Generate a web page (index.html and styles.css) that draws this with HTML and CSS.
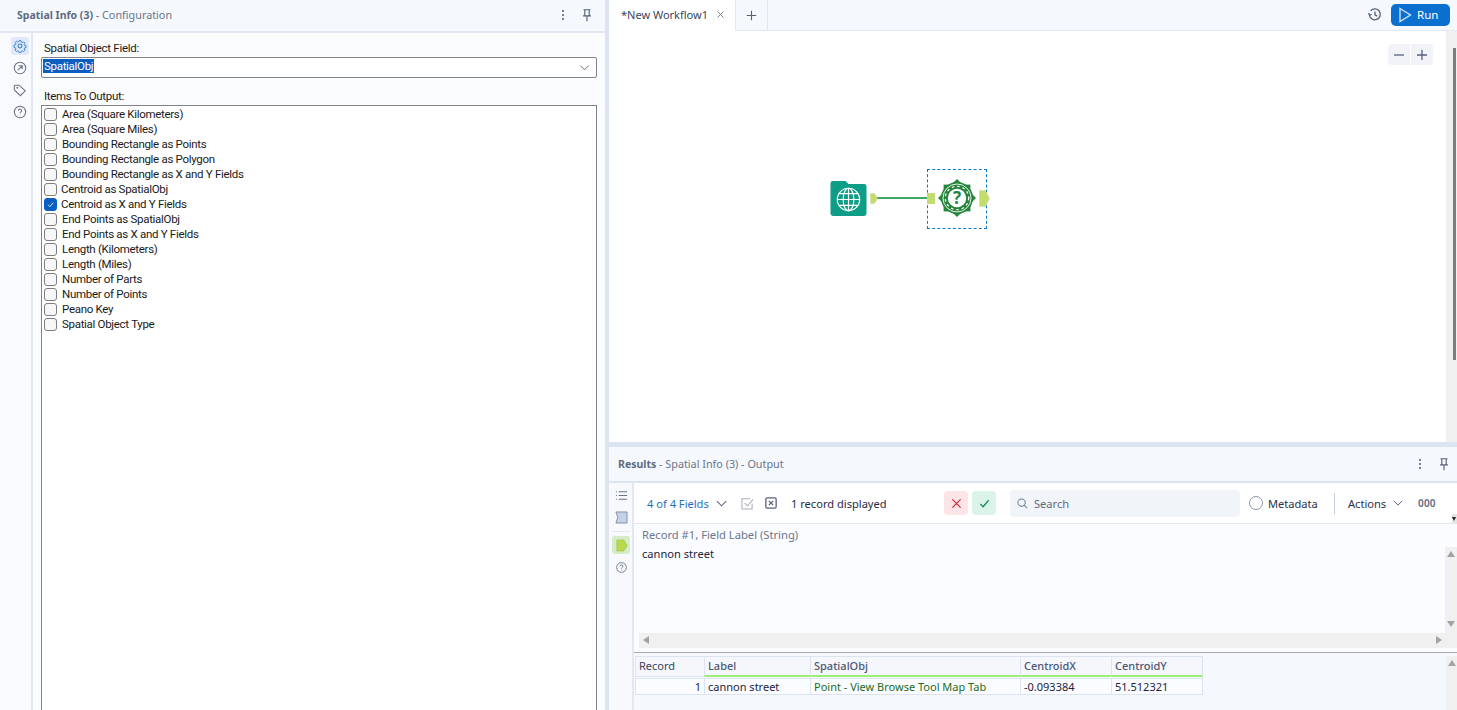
FILE: index.html
```html
<!DOCTYPE html>
<html lang="en">
<head>
<meta charset="utf-8">
<title>Spatial Info</title>
<link rel="stylesheet" href="styles.css">
</head>
<body>
<div class="app">
  <section class="left">
    <header class="phead">
      <div class="ptitle"><b>Spatial Info (3)</b> <span>- Configuration</span></div>
      <svg class="ic dots" viewBox="0 0 16 16"><circle cx="8" cy="3.5" r="1.2"/><circle cx="8" cy="8" r="1.2"/><circle cx="8" cy="12.5" r="1.2"/></svg>
      <svg class="ic pin" viewBox="0 0 16 16"><path d="M4 2h8M5.5 2v6.5M10.5 2v6.5M3.5 9h9M8 9v6"/></svg>
    </header>
    <div class="lbody">
      <nav class="lrail">
        <div class="rbtn on"><svg viewBox="0 0 16 16"><circle cx="8" cy="8" r="2.2"/><path d="M6.800 1.500h2.400l.4 1.900 1.400.6 1.600-1 1.700 1.700-1 1.600.6 1.400 1.900.4v2.400l-1.900.4-.6 1.400 1 1.600-1.700 1.700-1.600-1-1.400.6-.4 1.900H6.800l-.4-1.900-1.400-.6-1.600 1-1.700-1.700 1-1.600-.6-1.400-1.900-.4V7.300l1.900-.4.6-1.400-1-1.600 1.700-1.700 1.600 1 1.400-.6z" transform="translate(1 .6) scale(.88)"/></svg></div>
        <div class="rbtn"><svg viewBox="0 0 16 16"><circle cx="8" cy="8" r="6.500"/><path d="M5.500 10.500l5-5M6.500 5.500h4v4"/></svg></div>
        <div class="rbtn"><svg viewBox="0 0 16 16"><path d="M1.500 3v5l7 6.500 5.500-5.500-7-6.500H2.500a1 1 0 0 0-1 .5z"/><circle cx="5" cy="5.500" r=".5"/></svg></div>
        <div class="rbtn"><svg viewBox="0 0 16 16"><circle cx="8" cy="8" r="6.500"/><path d="M6.200 6.400a1.800 1.800 0 1 1 2.600 1.700c-.5.3-.8.6-.8 1.300M8 11v.6"/></svg></div>
      </nav>
      <div class="form">
        <label class="flabel">Spatial Object Field:</label>
        <div class="select"><span class="sel">SpatialObj</span>
          <svg class="chev" viewBox="0 0 12 12"><path d="M1.500 4l4.500 4.500L10.500 4"/></svg></div>
        <label class="flabel second">Items To Output:</label>
        <ul class="list">
          <li><i class="cb"></i>Area (Square Kilometers)</li>
          <li><i class="cb"></i>Area (Square Miles)</li>
          <li><i class="cb"></i>Bounding Rectangle as Points</li>
          <li><i class="cb"></i>Bounding Rectangle as Polygon</li>
          <li><i class="cb"></i>Bounding Rectangle as X and Y Fields</li>
          <li><i class="cb tight"></i>Centroid as SpatialObj</li>
          <li><i class="cb tight checked"><svg viewBox="0 0 13 13"><path d="M3.500 6.800l2.200 2.200 4-4.600"/></svg></i>Centroid as X and Y Fields</li>
          <li><i class="cb"></i>End Points as SpatialObj</li>
          <li><i class="cb"></i>End Points as X and Y Fields</li>
          <li><i class="cb"></i>Length (Kilometers)</li>
          <li><i class="cb"></i>Length (Miles)</li>
          <li><i class="cb"></i>Number of Parts</li>
          <li><i class="cb"></i>Number of Points</li>
          <li><i class="cb"></i>Peano Key</li>
          <li><i class="cb"></i>Spatial Object Type</li>
        </ul>
      </div>
    </div>
  </section>
  <div class="vdiv"></div>
  <section class="right">
    <header class="tabbar">
      <div class="tab">*New Workflow1<svg class="ic x" viewBox="0 0 12 12"><path d="M2 2l8 8M10 2l-8 8"/></svg></div>
      <div class="plus"><svg class="ic" viewBox="0 0 14 14"><path d="M7 1v12M1 7h12"/></svg></div>
      <div class="tabfill">
        <svg class="ic hist" viewBox="0 0 16 16"><path d="M2.600 8.500A5.800 5.800 0 1 0 4 4M1.800 6.500l.9 2.400 2.300-1.200M8.500 4.800v3.600l2.400 1.400"/></svg>
        <button class="run"><svg viewBox="0 0 14 16"><path d="M2 1.500l10.500 6.500L2 14.500z"/></svg>Run</button>
      </div>
    </header>
    <div class="canvas">
      <div class="zoom"><span><svg viewBox="0 0 12 12"><path d="M1 6h10"/></svg></span><span><svg viewBox="0 0 12 12"><path d="M1 6h10M6 1v10"/></svg></span></div>
      <div class="cscroll"><div class="thumb"></div></div>
      <svg class="wire" viewBox="0 0 60 4"><path d="M0 2h60"/></svg>
      <svg class="node input" viewBox="0 0 38 38"><path class="folder" d="M3 1h13l3 3h16a2.500 2.500 0 0 1 2.500 2.500v28a2.500 2.500 0 0 1-2.500 2.500H3a2.500 2.500 0 0 1-2.500-2.500v-31A2.500 2.500 0 0 1 3 1z"/><g class="globe"><circle cx="19" cy="20" r="11.500"/><ellipse cx="19" cy="20" rx="5.500" ry="11.500"/><path d="M19 8.500v23M7.500 20h23M9.500 14h19M9.500 26h19"/></g></svg>
      <svg class="anchor a1" viewBox="0 0 8 11"><path d="M.5.500h4l3 5-3 5h-4z"/></svg>
      <div class="selbox"></div>
      <svg class="anchor a2" viewBox="0 0 8 11"><path d="M0 0h8v11H0z"/></svg>
      <svg class="node info" viewBox="0 0 38 38"><polygon class="burst" points="19,0 38,19 19,38 0,19"/><polygon class="burst" points="5.600,5.600 32.400,5.600 32.400,32.400 5.600,32.400"/><circle class="burst" cx="19" cy="19" r="16"/><circle class="ring" cx="19" cy="19" r="14"/><circle class="dash" cx="19" cy="19" r="11.700"/><circle class="core" cx="19" cy="19" r="9.200"/><text x="19" y="25" text-anchor="middle">?</text></svg>
      <svg class="anchor a3" viewBox="0 0 11 17"><path d="M.5.500h6l4 8-4 8h-6z"/></svg>
    </div>
    <div class="hdiv"></div>
    <section class="results">
      <header class="phead rhead">
        <div class="ptitle"><b>Results</b> <span>- Spatial Info (3) - Output</span></div>
        <svg class="ic dots" viewBox="0 0 16 16"><circle cx="8" cy="3.500" r="1.200"/><circle cx="8" cy="8" r="1.200"/><circle cx="8" cy="12.500" r="1.200"/></svg>
        <svg class="ic pin" viewBox="0 0 16 16"><path d="M4 2h8M5.500 2v6.500M10.500 2v6.500M3.500 9h9M8 9v6"/></svg>
      </header>
      <div class="rbody">
        <nav class="rrail">
          <div class="rbtn2"><svg class="ln" viewBox="0 0 14 14"><path d="M1 3h1M4 3h9M1 7h1M4 7h9M1 11h1M4 11h9"/></svg></div>
          <div class="rbtn2 sep"><svg viewBox="0 0 14 14"><path class="flag" d="M1 1h12v12H1l2-6z"/></svg></div>
          <div class="rbtn2 act"><svg viewBox="0 0 14 14"><path class="tag" d="M2 1h7.500L13 7l-3.500 6H2z"/></svg></div>
          <div class="rbtn2"><svg class="ln" viewBox="0 0 16 16"><circle cx="8" cy="8" r="6"/><path d="M6.200 6.400a1.800 1.800 0 1 1 2.600 1.700c-.5.3-.8.6-.8 1.300M8 11v.6"/></svg></div>
        </nav>
        <div class="rmain">
          <div class="toolbar">
            <span class="fields">4 of 4 Fields</span>
            <svg class="tchev" viewBox="0 0 12 12"><path d="M1 3.500l5 5 5-5"/></svg>
            <svg class="tcheck" viewBox="0 0 14 14"><path d="M12 7v6H1V2h9M4 6.500l3 3 6-7"/></svg>
            <svg class="tx" viewBox="0 0 14 14"><rect x="1" y="1" width="12" height="12" rx="1.500"/><path d="M4.500 4.500l5 5M9.500 4.500l-5 5"/></svg>
            <span class="count">1 record displayed</span>
            <span class="sq red"><svg viewBox="0 0 12 12"><path d="M1.500 1.500l9 9M10.500 1.500l-9 9"/></svg></span>
            <span class="sq green"><svg viewBox="0 0 12 12"><path d="M1.500 6.500l3 3 6-7"/></svg></span>
            <div class="search"><svg viewBox="0 0 12 12"><circle cx="5" cy="5" r="4"/><path d="M8 8l3 3"/></svg>Search</div>
            <i class="radio"></i><span class="meta">Metadata</span>
            <span class="vsep"></span>
            <span class="actions">Actions</span>
            <svg class="achev" viewBox="0 0 12 12"><path d="M1 3.500l5 5 5-5"/></svg>
            <span class="ooo">000</span>
            <span class="tscroll"></span>
          </div>
          <div class="record">
            <div class="rtext">
              <div class="rlabel">Record #1, Field Label (String)</div>
              <div class="rval">cannon street</div>
            </div>
            <div class="vbar"><i class="up"></i><i class="down"></i></div>
          </div>
          <div class="hbar"><i class="lft"></i><i class="rgt"></i></div>
          <div class="tablewrap">
            <div class="table">
              <div class="th plain">Record</div><div class="th">Label</div><div class="th">SpatialObj</div><div class="th">CentroidX</div><div class="th">CentroidY</div>
              <div class="td num">1</div><div class="td">cannon street</div><div class="td geo">Point - View Browse Tool Map Tab</div><div class="td">-0.093384</div><div class="td">51.512321</div>
            </div>
            <div class="vbar2"><i class="up"></i></div>
          </div>
        </div>
      </div>
    </section>
  </section>
</div>
</body>
</html>
```
FILE: styles.css
```css
*{box-sizing:border-box}
html,body{margin:0;height:100%;overflow:hidden}
body{font-family:"Noto Sans","Open Sans",sans-serif;font-size:12px;color:#1f2a44;background:#fff}
svg{display:block;fill:none}
.app{display:flex;height:710px;width:1457px}
.left{width:605px;display:flex;flex-direction:column;background:#fbfcfe}
.vdiv{width:4px;background:#dde4f1}
.right{flex:1;min-width:0;display:flex;flex-direction:column}

.phead{height:33px;flex:none;display:flex;align-items:center;background:#f5f8fd;border-bottom:2px solid #e1e7f3;padding:0 11px 2px 17px}
.ptitle{flex:1;font-size:10.800px;color:#6b7588;white-space:nowrap}
.ptitle b{font-size:10.500px;font-weight:700;color:#5f6a80}
.ic{stroke:#55607a;stroke-width:1.400}
.dots{width:14px;height:14px;fill:#55607a;stroke:none;margin-right:10px}
.pin{width:14px;height:14px;stroke-width:1.300}

.lbody{flex:1;min-height:0;display:flex}
.lrail{width:33px;flex:none;border-right:2px solid #e1e7f3;background:#f9fafd;padding:4px 0 0 11px;display:flex;flex-direction:column;gap:4px}
.rbtn{width:18px;height:18px;border-radius:3px;display:flex;align-items:center;justify-content:center}
.rbtn svg{width:14px;height:14px;stroke:#6a7488;stroke-width:1.200}
.rbtn.on{background:#dfe9fb}
.rbtn.on svg{stroke:#2f7fd3}
.form{flex:1;min-width:0;padding:7px 8px 0 8px;font-family:Roboto,"Liberation Sans",sans-serif;font-size:11.500px;color:#1a1a1a;letter-spacing:-.3px}
.flabel{display:block;height:17px;line-height:16px;padding-left:3px}
.flabel.second{margin-top:10px;height:17px;line-height:17px}
.select{height:21px;border:1px solid #7f8489;border-radius:2px;background:#fff;display:flex;align-items:center;justify-content:space-between;padding:0 6px 3px 1px}
.sel{background:#0a5fc0;color:#fff;line-height:14px;padding:0 1px}
.chev{width:11px;height:11px;margin-top:3px;stroke:#555c66;stroke-width:1}
.list{list-style:none;margin:0;padding:1px 0 0 2px;height:640px;border:1px solid #7f8489;background:#fff}
.list li{height:15px;line-height:15px;display:flex;align-items:center;white-space:nowrap}
.cb{width:13px;height:13px;flex:none;margin-right:5px;border:1px solid #7e7e7e;border-radius:3px;background:#f7f7f7}
.cb.tight{margin-right:4px}
.cb.checked{background:#0a5fc0;border-color:#0a5fc0}
.cb svg{width:11px;height:11px;stroke:#fff;stroke-width:1}

.tabbar{height:31px;flex:none;display:flex;background:#f5f8fd}
.tab{width:126px;background:#fff;font-size:11px;color:#3a4560;display:flex;align-items:center;padding:0 0 2px 12px;white-space:nowrap}
.x{width:9px;height:9px;margin-left:8px;stroke:#6b7690;stroke-width:1.200}
.plus{width:33px;border:1px solid #e1e7f3;border-width:0 1px 1px 1px;display:flex;align-items:center;justify-content:center}
.plus svg{width:11px;height:11px;stroke-width:1.400}
.tabfill{flex:1;border-bottom:1px solid #e1e7f3;display:flex;justify-content:flex-end;align-items:center;padding:0 7px 1px 0}
.hist{width:15px;height:15px;margin-right:9px;stroke-width:1.400}
.run{width:59px;height:22px;border:0;border-radius:5px;background:#0b6fd0;color:#fff;font:11.500px "Noto Sans",sans-serif;display:flex;align-items:center;gap:5px;padding:0 0 0 7px}
.run svg{width:14px;height:16px;stroke:#cfe2fa;stroke-width:1.400}

.canvas{height:411px;flex:none;position:relative;background:#fff}
.cscroll{position:absolute;left:837px;top:0;width:11px;height:100%;background:#f0f0f0}
.thumb{position:absolute;left:7px;top:17px;width:3px;height:312px;background:#7d7d7d}
.zoom{position:absolute;left:779px;top:13px;width:45px;height:21px;border-radius:4px;background:#f1f3f9;display:flex}
.zoom span{flex:1;display:flex;align-items:center;justify-content:center}
.zoom span+span{border-left:1px solid #fff}
.zoom svg{width:12px;height:12px;stroke:#56617c;stroke-width:1.300}
.wire{position:absolute;left:266px;top:165px;width:60px;height:4px;stroke:#3fa766;stroke-width:2}
.node{position:absolute}
.input{left:221px;top:149px;width:37px;height:37px}
.folder{fill:#0e9d86}
.globe{stroke:#fff;stroke-width:1.200}
.anchor{position:absolute;fill:#c3dd6a;stroke:#c9d6a8;stroke-width:.5}
.a1{left:261px;top:162px;width:8px;height:11px}
.a2{left:318px;top:162px;width:8px;height:11px}
.a3{left:370px;top:159px;width:11px;height:17px}
.selbox{position:absolute;left:318px;top:138px;width:60px;height:60px;border:1px dashed #0c78d0}
.info{left:329px;top:148px;width:38px;height:38px}
.burst{fill:#25853c}
.ring{fill:none;stroke:#fff;stroke-width:.9}
.dash{fill:none;stroke:#fff;stroke-width:1.300;stroke-dasharray:2.500 3}
.core{fill:#fff;stroke:none}
.info text{font:700 17px "Noto Sans",sans-serif;fill:#25853c}

.hdiv{height:5px;flex:none;background:#dde4f1}
.results{flex:1;min-height:0;display:flex;flex-direction:column;background:#f5f8fd}
.rhead{height:36px;border-bottom-width:2px;padding:0 6px 1px 9px;border-color:#dde4f1}
.rbody{flex:1;min-height:0;display:flex}
.rrail{width:25px;flex:none;padding:3px 0 0 1px;border-right:2px solid #e1e7f3;background:#f7f9fd;display:flex;flex-direction:column;align-items:center}
.rbtn2{width:18px;height:18px;margin-bottom:4px;border-radius:3px;display:flex;align-items:center;justify-content:center}
.rbtn2 svg{width:13px;height:13px}
.rbtn2 .ln{stroke:#68728a;stroke-width:1.100}
.flag{fill:#c4d2e8;stroke:#6d7a94;stroke-width:.8}
.rbtn2.sep{position:relative;margin-bottom:10px}
.rbtn2.sep::after{content:"";position:absolute;left:0;right:0;bottom:-6px;height:1px;background:#e1e7f3}
.rbtn2.act{background:#d6ecc6}
.tag{fill:#b9d94e;stroke:#9dbb3e;stroke-width:.6}
.rmain{flex:1;min-width:0;display:flex;flex-direction:column;background:#fbfcff}
.toolbar{height:41px;flex:none;background:#fff;border-bottom:1px solid #e3e6ec;display:flex;align-items:center;position:relative;padding-left:13px;font-size:11.100px;color:#27324c}
.fields{color:#1a6fc4;width:63px;white-space:nowrap}
.tchev{width:11px;height:11px;margin-left:6px;stroke:#5f6a80;stroke-width:1.200}
.tcheck{width:13px;height:13px;margin-left:14px;stroke:#a9adb5;stroke-width:1.100}
.tx{width:12px;height:12px;margin-left:11px;stroke:#56617c;stroke-width:1.500}
.count{margin-left:14px;width:153px;white-space:nowrap;color:#1f2a44}
.sq{width:24px;height:24px;border-radius:4px;display:flex;align-items:center;justify-content:center}
.sq svg{width:11px;height:11px;stroke-width:1.400}
.red{background:#fde4e6;stroke:#d9283c}
.green{background:#dcf3ea;stroke:#138a5c;margin-left:4px}
.search{width:230px;height:27px;margin-left:14px;border-radius:4px;background:#f1f4f9;display:flex;align-items:center;gap:6px;padding-left:7px;color:#5f6a80}
.search svg{width:11px;height:11px;stroke:#6f7b93;stroke-width:1.100}
.radio{width:14px;height:14px;margin-left:9px;border:1px solid #8996b0;border-radius:50%;background:#fff}
.meta{margin-left:5px;width:49px}
.vsep{width:1px;height:21px;margin-left:17px;background:#c6cedc}
.actions{margin-left:13px;width:38px}
.achev{width:10px;height:10px;margin-left:7px;stroke:#5f6a80;stroke-width:1.200}
.ooo{margin-left:15px;font-size:10px;font-weight:600;color:#5f6a80;letter-spacing:.2px}
.tscroll{position:absolute;right:0;bottom:0;width:5px;height:9px;background:#e4e4e4}
.tscroll::after{content:"";position:absolute;left:0;top:3px;border:2.500px solid transparent;border-bottom:0;border-top:4px solid #222}
.record{height:109px;flex:none;display:flex}
.rtext{flex:1;padding:2px 0 0 8px}
.rlabel{font-size:11.200px;line-height:18px;color:#6b7588}
.rval{font-size:11.100px;line-height:20px;color:#1c2438}
.vbar{width:12px;background:#f0f0f0;margin-top:23px;position:relative}
.vbar2{width:11px;background:#f0f0f0;position:relative}
.up{position:absolute;left:2px;top:4px;border:4px solid transparent;border-top:0;border-bottom:6px solid #a3a3a3}
.down{position:absolute;left:2px;bottom:6px;border:4px solid transparent;border-bottom:0;border-top:6px solid #a3a3a3}
.hbar{height:15px;flex:none;background:#f0f0f0;margin-left:5px;position:relative}
.lft{position:absolute;left:4px;top:3px;border:4px solid transparent;border-left:0;border-right:6px solid #a3a3a3}
.rgt{position:absolute;right:15px;top:3px;border:4px solid transparent;border-right:0;border-left:6px solid #a3a3a3}
.tablewrap{flex:1;min-height:0;margin-top:4px;border-top:1px solid #a8a8a8;padding-top:3px;display:flex;justify-content:space-between;align-items:stretch;background:#f5f8fd}
.table{display:grid;grid-template-columns:69px 106px 210px 91px 91px;grid-template-rows:21px 18px;align-self:flex-start;margin-left:2px;font-size:11px}
.th,.td{border:1px solid #dde4f1;padding-left:3px;white-space:nowrap;margin-left:-1px}
.th{background:#f5f7fc;color:#4d5874;line-height:17px;border-bottom:2px solid #9bef75;font-weight:500}
.th.plain{border-bottom:1px solid #dde4f1;color:#3a4358;font-weight:400}
.td{background:#fbfcff;color:#1c2438;line-height:15px;border-top:1px solid #dde4f1;margin-top:1px}
.num{text-align:right;padding-right:3px}
.geo{color:#1b6b1b}
```
